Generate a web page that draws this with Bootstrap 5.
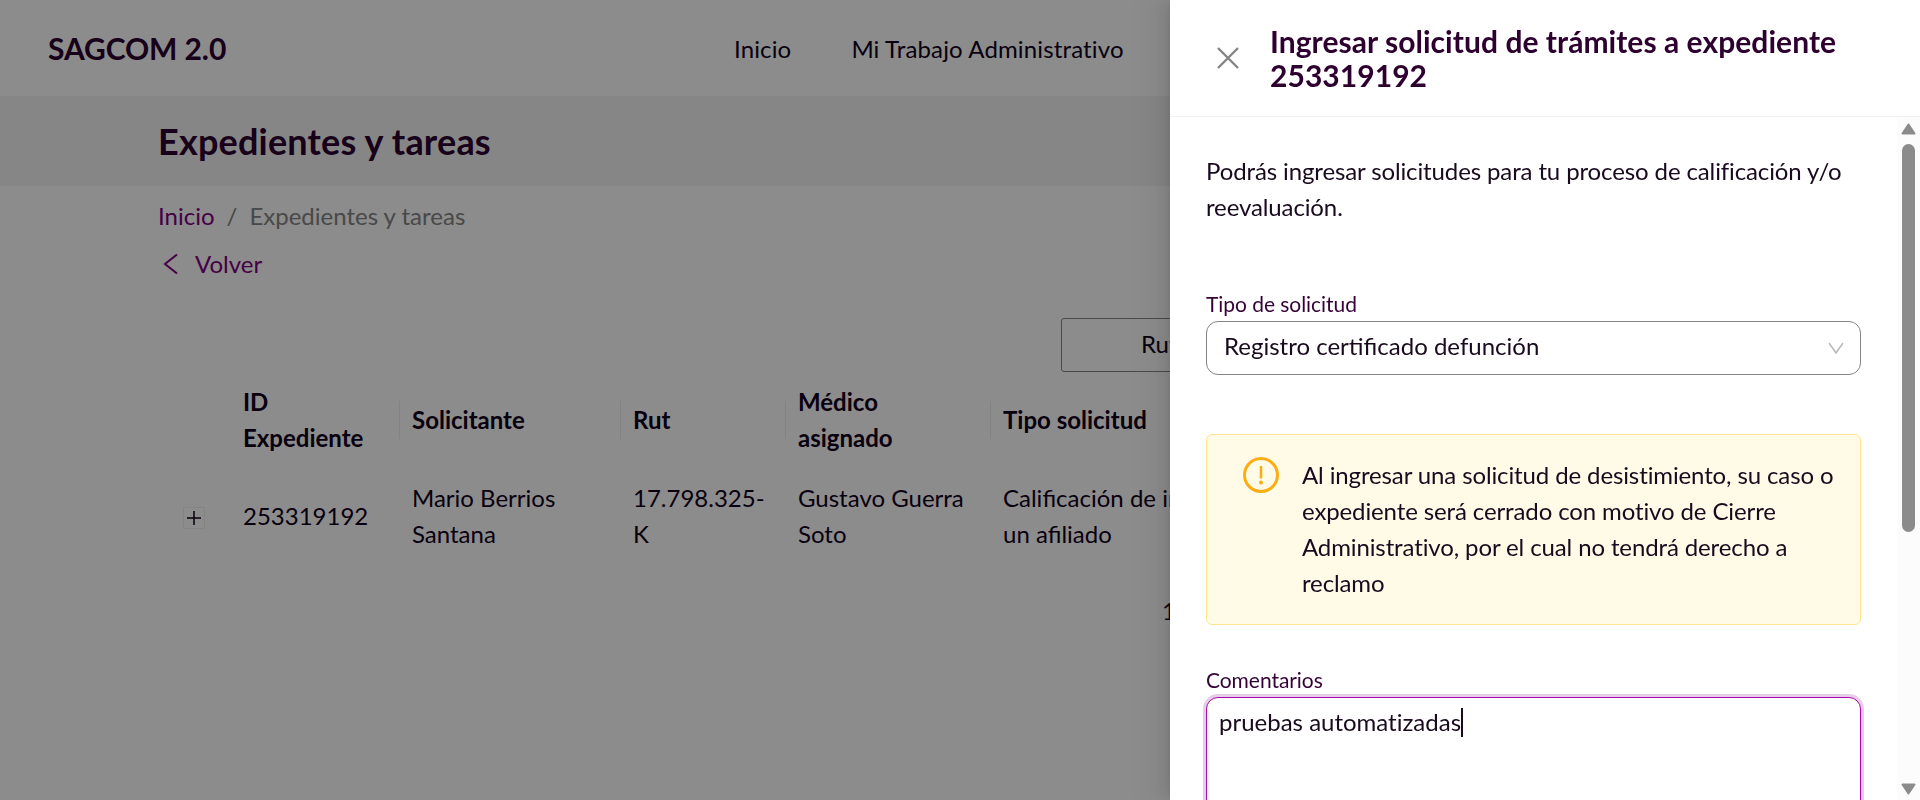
<!DOCTYPE html>
<html lang="es">
<head>
<meta charset="utf-8">
<meta name="viewport" content="width=device-width, initial-scale=1">
<title>SAGCOM 2.0</title>
<link href="https://cdn.jsdelivr.net/npm/bootstrap@5.3.0/dist/css/bootstrap.min.css" rel="stylesheet">
<style>
  html, body { height: 100%; overflow: hidden; }
  body { font-family: Lato, "Liberation Sans", sans-serif; font-size: 24px; line-height: 36px; color: #1a0a1f; background: #fff; }
  .app-shell { height: 100%; }
  .topbar { height: 96px; padding: 0 48px; }
  .topbar .navbar-brand { font-size: 30px; font-weight: 700; color: #2d0030; width: 686px; margin: 0; padding: 0; letter-spacing: -.1px; }
  .topbar .nav { gap: 60px; white-space: nowrap; padding-top: 2px; }
  .topbar .nav-link { padding: 0; color: #10001a; letter-spacing: .14px; }
  .title-band { height: 90px; background: #f5f5f5; padding: 0 158px; }
  .title-band h1 { font-size: 36px; line-height: 1; font-weight: 700; color: #2d0030; letter-spacing: .2px; }
  .page-body { padding: 12px 159px 0; }
  .accent, .accent:hover { color: #7f0080; text-decoration: none; }
  .breadcrumb { margin: 0 0 12px -1px; --bs-breadcrumb-item-padding-x: 12px; --bs-breadcrumb-divider-color: #858585; --bs-breadcrumb-item-active-color: #858585; }
  .back-link { gap: 12px; }
  .btn-rut { height: 54px; width: 200px; margin: 36px 0 0 902px; border: 1px solid #858585; border-radius: 3px; color: #10001a; font-size: 24px; line-height: 36px; padding: 6px 0 8px; text-align: left; text-indent: 79px; }
  .files-table { width: 1602px; table-layout: fixed; margin: 0; color: #10001a; --bs-table-bg: transparent; line-height: 36px; }
  .files-table > :not(caption) > * > * { border: 0; padding: 12px; vertical-align: middle; color: #10001a; }
  .files-table th { font-weight: 700; position: relative; }
  .files-table th.sep::after { content: ""; position: absolute; right: 0; top: 29px; width: 1px; height: 38px; background: #ededed; }
  .expand { width: 22px; height: 22px; border: 1px solid #f0f0f0; margin-left: 12px; margin-top: 3px; }
  .files-pager { padding: 29px 0 0 1003px; }

  .page-mask { background: rgba(0,0,0,.45); z-index: 1040; }
  .request-drawer.offcanvas { --bs-offcanvas-width: 750px; border: 0; outline: 0; color: #1a0a1f; background: #fff; box-shadow: -6px 0 16px rgba(0,0,0,.08), -3px 0 6px -4px rgba(0,0,0,.12), -9px 0 28px 8px rgba(0,0,0,.05); transition: none; }
  .request-drawer .offcanvas-header { flex: none; height: 117px; padding: 23px 36px 24px; border-bottom: 1px solid #f0f0f0; justify-content: flex-start; }
  .request-drawer .offcanvas-title { font-size: 30px; line-height: 34px; font-weight: 700; color: #2d0030; margin-left: 20px; letter-spacing: .05px; }
  .request-drawer .offcanvas-body { padding: 36px 36px 0; overflow: hidden; }
  .intro, .notice { letter-spacing: -.12px; }
  .close-x { width: 44px; flex: none; padding: 0; border: 0; background: none; line-height: 0; }
  .form-label { font-size: 21px; line-height: 31px; margin: 0; padding-bottom: 2px; color: #350238; letter-spacing: -.05px; }
  .request-drawer .form-control { font-size: 24px; line-height: 36px; color: #1a0a1f; border: 1px solid #858585; border-radius: 12px; }
  .type-select { height: 54px; padding: 5px 16px 10px 17px; }
  .type-select svg { margin-top: 4px; }
  .notice { margin: 59px 0 0; height: 191px; padding: 22px 24px 22px 36px; background: #fffbe6; border: 1px solid #ffe58f; border-radius: 6px; gap: 23px; color: #1a0a1f; }
  .request-drawer .comments { height: 160px; padding: 6px 12px; border-color: #ae0bae; box-shadow: 0 0 0 3px #e7cde8; font-variant-ligatures: none; }
  .caret { display: inline-block; width: 2px; height: 29px; background: #1a0a1f; vertical-align: -6px; }
  .scroll-rail { width: 23px; background: #fcfcfc; padding: 6px 0 5px; }
  .scroll-thumb { width: 13px; height: 388px; border-radius: 7px; background: #8b8b8b; margin-top: 9px; }
</style>
</head>
<body>
<div class="app-shell overflow-hidden position-relative">
<nav class="topbar navbar flex-nowrap justify-content-start bg-white">
  <a class="navbar-brand flex-shrink-0" href="#">SAGCOM 2.0</a>
  <div class="nav flex-nowrap">
    <a class="nav-link" href="#">Inicio</a>
    <a class="nav-link" href="#">Mi Trabajo Administrativo</a>
  </div>
</nav>
<header class="title-band d-flex align-items-center"><h1 class="m-0">Expedientes y tareas</h1></header>
<main class="page-body">
  <ol class="breadcrumb">
    <li class="breadcrumb-item"><a class="accent" href="#">Inicio</a></li>
    <li class="breadcrumb-item active">Expedientes y tareas</li>
  </ol>
  <a class="accent back-link d-flex align-items-center" href="#">
    <svg width="24" height="24" viewBox="0 0 24 24" fill="none" stroke="currentColor" stroke-width="2"><path d="M18 2.500 6 12l12 9.500"/></svg>
    Volver
  </a>
  <button class="btn btn-rut d-block" type="button">Rut</button>
  <table class="table files-table">
    <colgroup><col style="width:72px"><col style="width:169px"><col style="width:221px"><col style="width:165px"><col style="width:205px"><col style="width:270px"><col></colgroup>
    <thead><tr><th></th><th class="sep">ID Expediente</th><th class="sep">Solicitante</th><th class="sep">Rut</th><th class="sep">Médico<br>asignado</th><th>Tipo solicitud</th><th></th></tr></thead>
    <tbody><tr>
      <td><div class="expand d-flex align-items-center justify-content-center"><svg width="14" height="14" viewBox="0 0 14 14" stroke="#10001a" stroke-width="1.500"><path d="M0 7h14M7 0v14"/></svg></div></td>
      <td>253319192</td><td>Mario Berrios Santana</td><td>17.798.325-<br>K</td><td>Gustavo Guerra Soto</td><td><span class="text-nowrap">Calificación de invalidez de</span><br>un afiliado</td><td></td>
    </tr></tbody>
  </table>
  <div class="files-pager">1</div>
</main>

<div class="page-mask position-absolute top-0 start-0 w-100 h-100"></div>
</div>

<aside class="request-drawer offcanvas offcanvas-end show" data-bs-backdrop="false" data-bs-scroll="true" tabindex="-1">
  <div class="offcanvas-header">
    <button class="close-x" type="button" aria-label="Cerrar"><svg width="24" height="24" viewBox="0 0 24 24" fill="none" stroke="#858585" stroke-width="2.400"><path d="M2 2l20 20M22 2 2 22"/></svg></button>
    <h2 class="offcanvas-title">Ingresar solicitud de trámites a expediente 253319192</h2>
  </div>
  <div class="d-flex flex-grow-1 overflow-hidden">
    <div class="offcanvas-body">
      <p class="intro mb-0">Podrás ingresar solicitudes para tu proceso de calificación y/o reevaluación.</p>
      <div class="form-label" style="margin-top:63px">Tipo de solicitud</div>
      <div class="form-control type-select d-flex align-items-center justify-content-between">
        <span>Registro certificado defunción</span>
        <svg width="16" height="12" viewBox="0 0 16 12" fill="none" stroke="#b8b8b8" stroke-width="1.500"><path d="M1 1l7 10 7-10"/></svg>
      </div>
      <div class="notice d-flex align-items-start">
        <svg class="flex-shrink-0" width="36" height="36" viewBox="0 0 36 36"><circle cx="18" cy="18" r="16.500" fill="none" stroke="#faad14" stroke-width="3"/><rect x="16.700" y="9" width="2.600" height="12.500" rx=".6" fill="#faad14"/><circle cx="18" cy="25.500" r="2" fill="#faad14"/></svg>
        <div>Al ingresar una solicitud de desistimiento, su caso o expediente será cerrado con motivo de Cierre Administrativo, por el cual no tendrá derecho a reclamo</div>
      </div>
      <div class="form-label" style="margin-top:39px">Comentarios</div>
      <div class="form-control comments">pruebas automatizadas<span class="caret"></span></div>
    </div>
    <div class="scroll-rail d-flex flex-column align-items-center flex-shrink-0">
      <svg width="15" height="12" viewBox="0 0 15 12"><path d="M7.500 1.500 13.500 10.500h-12z" fill="#8b8b8b" stroke="#8b8b8b" stroke-width="2" stroke-linejoin="round"/></svg>
      <div class="scroll-thumb"></div>
      <svg class="mt-auto" width="15" height="12" viewBox="0 0 15 12"><path d="M7.500 10.500 13.500 1.500h-12z" fill="#8b8b8b" stroke="#8b8b8b" stroke-width="2" stroke-linejoin="round"/></svg>
    </div>
  </div>
</aside>
<script src="https://cdn.jsdelivr.net/npm/bootstrap@5.3.0/dist/js/bootstrap.bundle.min.js"></script>
</body>
</html>
